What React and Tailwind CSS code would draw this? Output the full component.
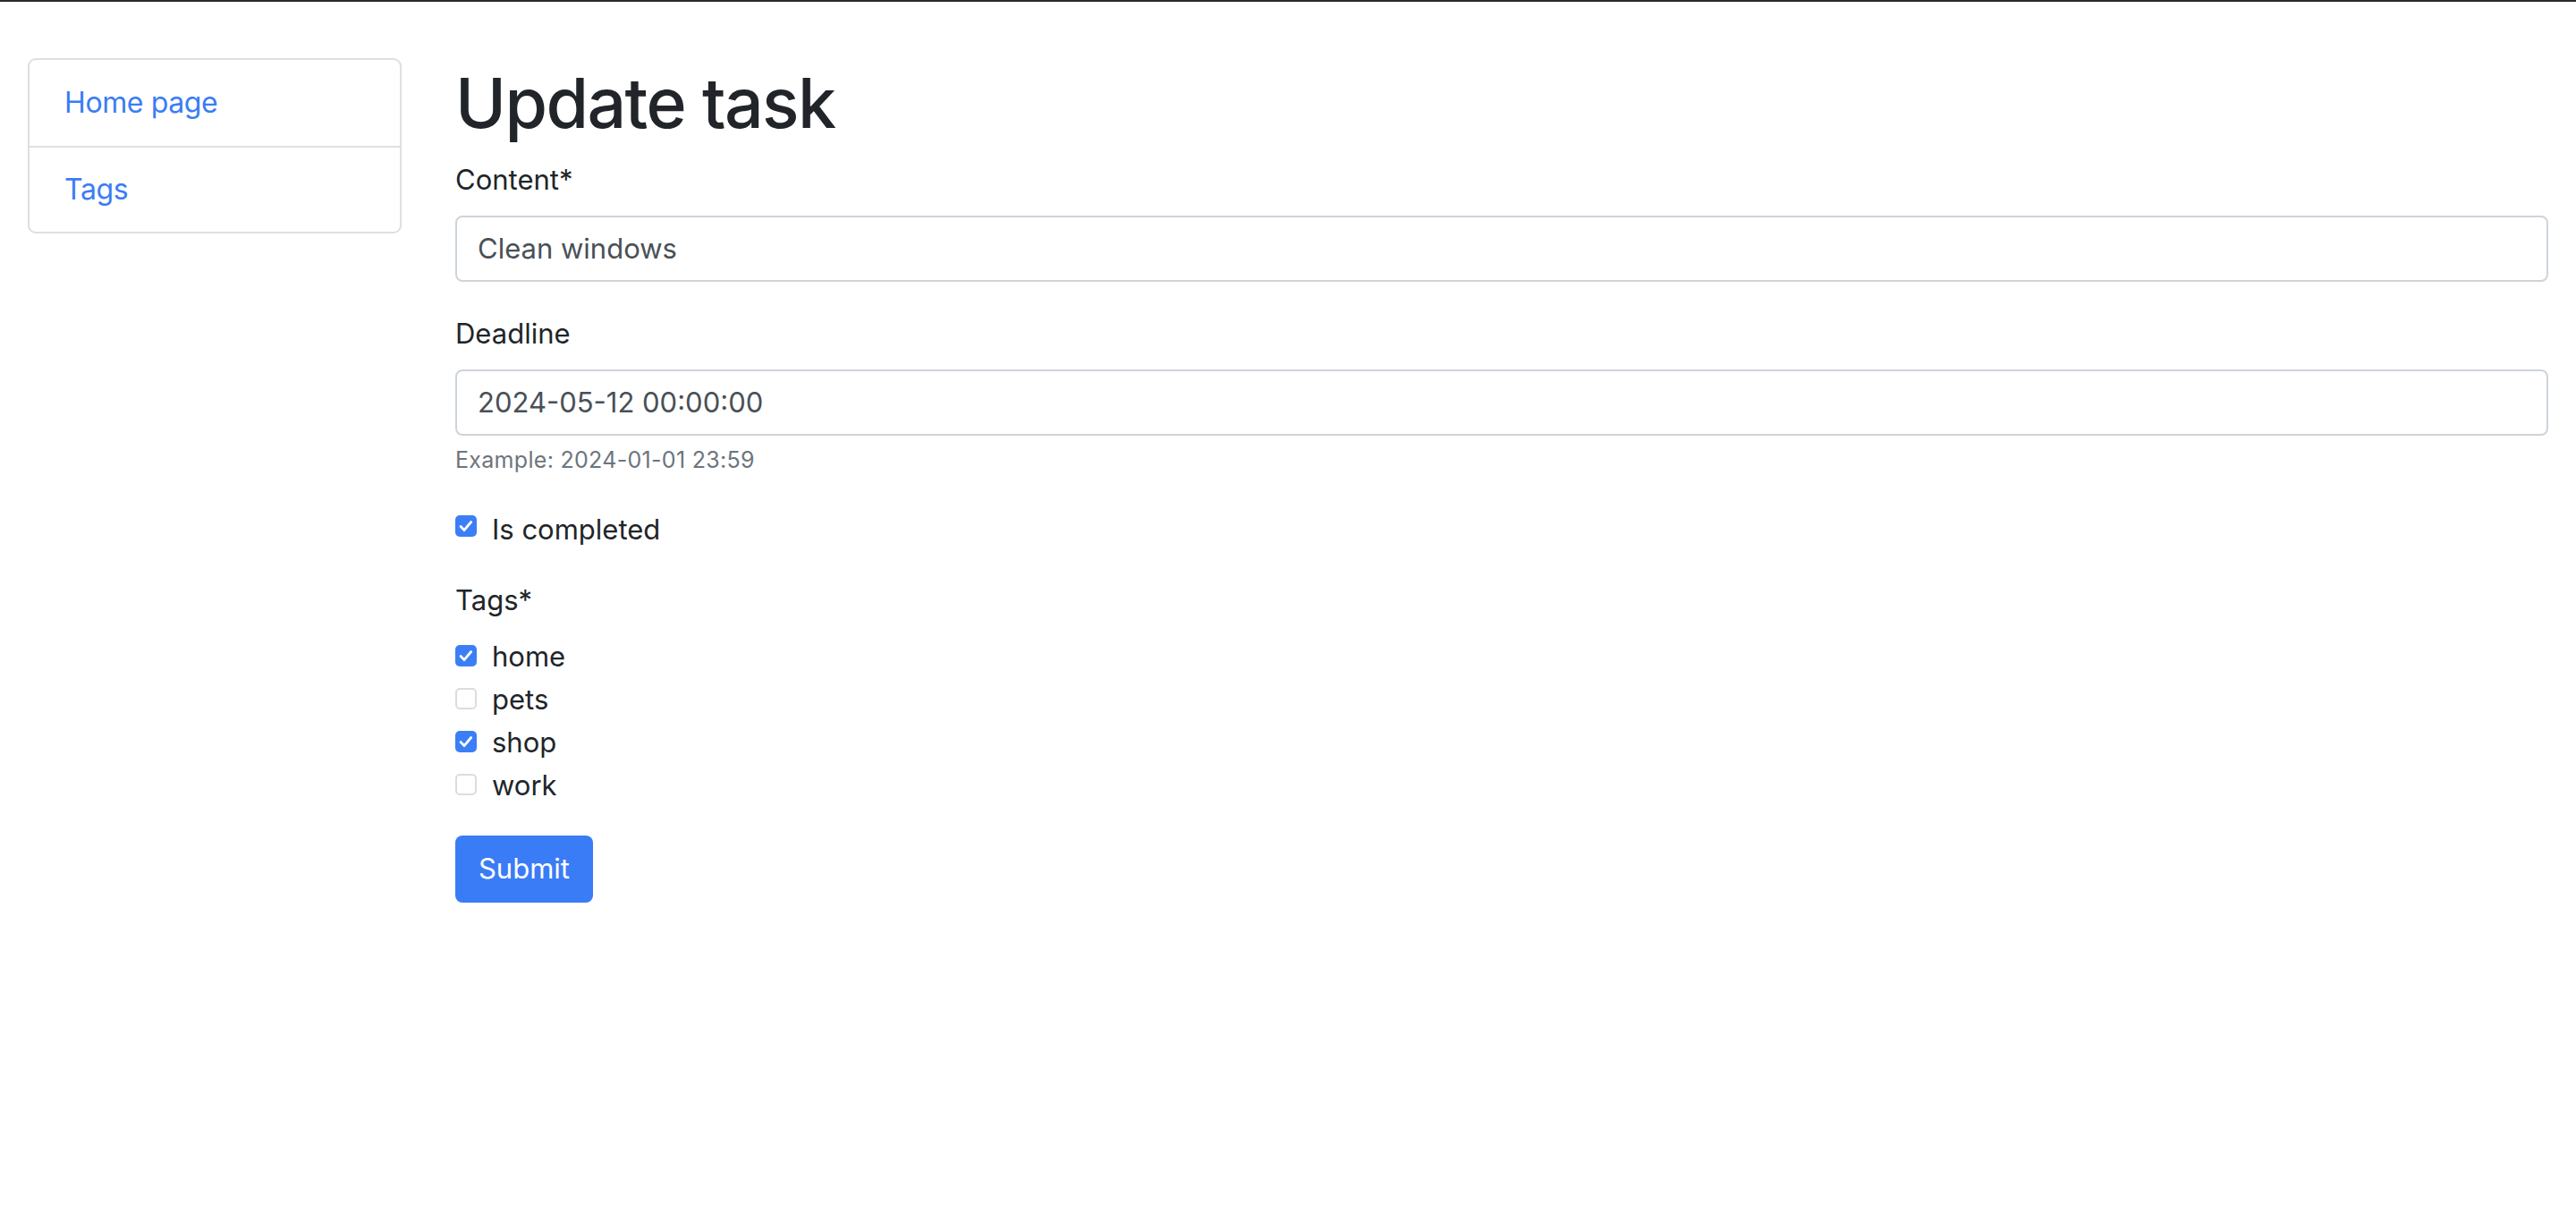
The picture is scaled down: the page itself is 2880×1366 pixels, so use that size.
const tags = [
  { name: "home", checked: true },
  { name: "pets", checked: false },
  { name: "shop", checked: true },
  { name: "work", checked: false },
];

const Box = ({ checked }) =>
  checked ? (
    <span className="flex h-[24px] w-[24px] shrink-0 items-center justify-center rounded-[5px] bg-[#3b7ff6]">
      <svg viewBox="0 0 24 24" className="h-[22px] w-[22px]" fill="none" stroke="white" strokeWidth="3" strokeLinecap="round" strokeLinejoin="round">
        <path d="M5.5 12.5l4.3 4.6 8.4-10" />
      </svg>
    </span>
  ) : (
    <span className="block h-[24px] w-[24px] shrink-0 rounded-[5px] border-2 border-[#dcdcdc] bg-white" />
  );

const App = () => {
  return (
    <div className="min-h-screen border-t-2 border-[#2b2b2b] bg-white font-['Inter','Noto_Sans',sans-serif] text-[#212529]">
      <div className="flex gap-[60px] pr-[31px] pl-[31px]">
        {/* menu */}
        <div className="mt-[63px] flex h-[196px] w-[418px] shrink-0 flex-col rounded-[9px] border-2 border-[#dfdfdf]">
          <a className="flex h-[96px] items-center pl-[39px] text-[32px] tracking-[-0.4px] text-[#3a7df5]">Home page</a>
          <div className="h-[2px] bg-[#dfdfdf]" />
          <a className="flex h-[94px] items-center pl-[39px] text-[32px] tracking-[-0.4px] text-[#3a7df5]">Tags</a>
        </div>

        {/* formulaire */}
        <div className="flex min-w-0 flex-1 flex-col pt-[67px]">
          <h1 className="mb-[17px] h-[92px] text-[77px] leading-[92px] font-medium tracking-[-1.6px]">Update task</h1>

          <label className="mb-[17px] block h-[46px] text-[31px] leading-[46px]">Content*</label>
          <div className="flex h-[74px] items-center rounded-[8px] border-2 border-[#ced4da] px-[23px] text-[31px] text-[#495057]">
            Clean windows
          </div>

          <label className="mt-[35px] mb-[17px] block h-[46px] text-[31px] leading-[46px]">Deadline</label>
          <div className="flex h-[74px] items-center rounded-[8px] border-2 border-[#ced4da] px-[23px] text-[31px] text-[#495057]">
            2024-05-12 00:00:00
          </div>
          <p className="mt-[9px] h-[36px] text-[25px] leading-[36px] tracking-[0.3px] text-[#6c757d]">Example: 2024-01-01 23:59</p>

          <div className="mt-[37px] flex h-[46px] items-start gap-[17px] text-[31px] leading-[46px]">
            <span className="mt-[7px]">
              <Box checked={true} />
            </span>
            <span>Is completed</span>
          </div>

          <label className="mt-[33px] block h-[46px] text-[31px] leading-[46px]">Tags*</label>
          <div className="mt-[16px] flex flex-col">
            {tags.map((tag) => (
              <div key={tag.name} className="flex h-[48px] items-start gap-[17px] text-[31px] leading-[48px]">
                <span className="mt-[11px]">
                  <Box checked={tag.checked} />
                </span>
                <span>{tag.name}</span>
              </div>
            ))}
          </div>

          <div className="mt-[32px]">
            <button className="h-[75px] w-[154px] rounded-[8px] bg-[#3a7cf6] text-[31px] text-white">Submit</button>
          </div>
        </div>
      </div>
    </div>
  );
};

export default App;
